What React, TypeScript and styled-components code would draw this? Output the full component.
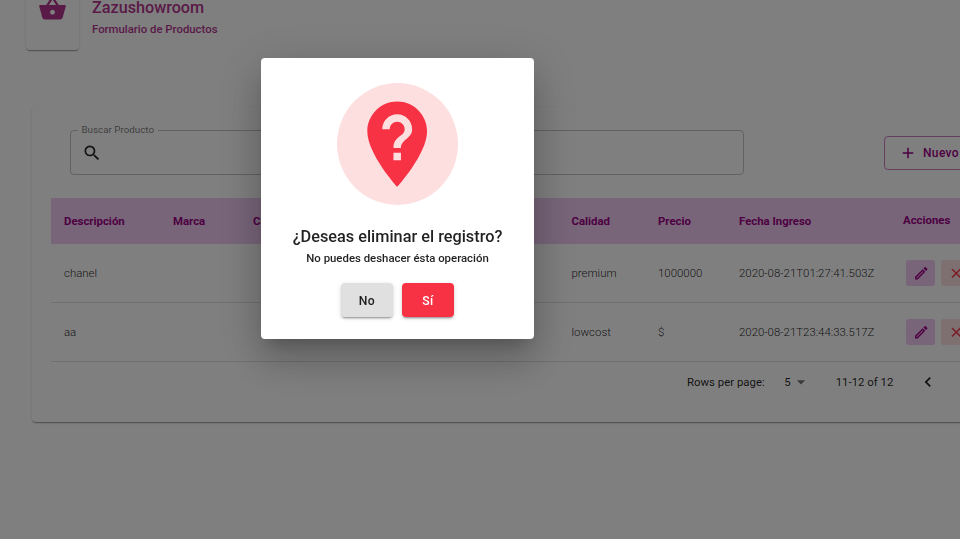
import React from "react";
import styled, { createGlobalStyle, css } from "styled-components";
import {
  MdAdd,
  MdArrowDropDown,
  MdChevronLeft,
  MdClose,
  MdNotListedLocation,
  MdOutlineEdit,
  MdSearch,
  MdShoppingBasket,
} from "react-icons/md";

const GlobalStyle = createGlobalStyle`
  *, *::before, *::after { box-sizing: border-box; }
  html, body { margin: 0; height: 100%; overflow: hidden; background: #fff; }
  body { font-family: Roboto, "Liberation Sans", sans-serif; color: rgba(0, 0, 0, 0.87); }
  button { font-family: inherit; }
`;

const paper = css`
  background: #fff;
  border-radius: 4px;
  box-shadow: 0 2px 1px -1px rgba(0, 0, 0, 0.2), 0 1px 1px 0 rgba(0, 0, 0, 0.14),
    0 1px 3px 0 rgba(0, 0, 0, 0.12);
`;

const Page = styled.div`
  height: 539px;
  overflow: hidden;
`;

const Header = styled.header`
  display: flex;
  height: 50px;
  padding-left: 26px;
  align-items: flex-end;
`;

const HeaderIcon = styled.div`
  ${paper}
  display: flex;
  flex: none;
  justify-content: center;
  align-items: flex-end;
  width: 53px;
  height: 54px;
  padding: 0 1px 27px 0;
  color: #b4358f;
  font-size: 29px;
`;

const HeaderText = styled.div`
  margin-left: 13px;
  height: 50px;
  color: #b4358f;
  white-space: nowrap;
`;

const Title = styled.h1`
  margin: 0;
  font-size: 16.2px;
  line-height: 15px;
  font-weight: 500;
`;

const Subtitle = styled.h2`
  margin: 5px 0 0;
  font-size: 11.37px;
  line-height: 18px;
  font-weight: 500;
`;

const Card = styled.main`
  ${paper}
  width: 996px;
  height: 315px;
  margin: 57px 0 0 32px;
  padding: 23px 19px 0;
`;

const Toolbar = styled.div`
  display: flex;
  align-items: flex-start;
  height: 68px;
  padding-left: 19px;
`;

const SearchField = styled.fieldset`
  width: 674px;
  height: 50px;
  min-width: 0;
  margin: -5px 140px 0 0;
  padding: 0 10px;
  border: 1px solid rgba(0, 0, 0, 0.23);
  border-radius: 4px;
  color: #222;
  font-size: 20px;
  line-height: 0;
`;

const SearchLabel = styled.legend`
  height: 10px;
  margin-left: -3.5px;
  padding: 0 4px;
  color: rgba(0, 0, 0, 0.54);
  font-size: 9.8px;
  line-height: 9px;
`;

const SearchIcon = styled(MdSearch)`
  margin: 8px 0 0 0.5px;
`;

const NewButton = styled.button`
  display: flex;
  align-items: center;
  width: 100px;
  height: 34px;
  margin-top: 6px;
  padding: 0 14px;
  border: 1px solid rgba(156, 0, 132, 0.5);
  border-radius: 4px;
  background: transparent;
  color: #9c0084;
  font-size: 12px;
  font-weight: 500;
  letter-spacing: 0.35px;
  svg { margin-right: 6px; font-size: 18px; }
`;

const columns = css`
  display: grid;
  grid-template-columns: 109px 80px 318.5px 86.5px 81px 164px 1fr;
  align-items: center;
  padding-left: 13px;
`;

const TableHead = styled.div`
  ${columns}
  height: 46px;
  background: #f0caf4;
  color: #9c0084;
  font-size: 11.4px;
  font-weight: 700;
`;

const ActionsHeading = styled.span`
  padding-bottom: 2px;
`;

const TableRow = styled.div`
  ${columns}
  height: 59px;
  border-bottom: 1px solid #e0e0e0;
  font-size: 11.43px;
  font-weight: 300;
`;

const Actions = styled.div`
  display: flex;
  gap: 6px;
  padding-left: 3px;
`;

const ActionButton = styled.button<{ $danger?: boolean }>`
  display: flex;
  align-items: center;
  justify-content: center;
  width: 29px;
  height: 26px;
  padding: 0 0 0 1px;
  border: 0;
  border-radius: 3px;
  background: ${(p) => (p.$danger ? "#fddfe0" : "#f0caf4")};
  color: ${(p) => (p.$danger ? "#f83245" : "#9c0084")};
  font-size: 16.5px;
`;

const Pagination = styled.div`
  display: flex;
  align-items: center;
  height: 40px;
  padding-left: 636px;
  font-size: 11.4px;
  white-space: nowrap;
`;

const PageSize = styled.div`
  display: flex;
  align-items: center;
  width: 51.5px;
  margin-left: 19.5px;
  svg { font-size: 20px; color: rgba(0, 0, 0, 0.54); }
`;

const PreviousIcon = styled(MdChevronLeft)`
  margin-left: 25px;
  font-size: 20px;
`;

const Backdrop = styled.div`
  position: fixed;
  inset: 0;
  background: rgba(0, 0, 0, 0.5);
`;

const Dialog = styled.div`
  position: absolute;
  left: 261px;
  top: 58px;
  display: flex;
  flex-direction: column;
  align-items: center;
  width: 273px;
  height: 281px;
  padding-top: 25px;
  border-radius: 4px;
  background: #fff;
  box-shadow: 0 11px 15px -7px rgba(0, 0, 0, 0.2), 0 24px 38px 3px rgba(0, 0, 0, 0.14),
    0 9px 46px 8px rgba(0, 0, 0, 0.12);
`;

const QuestionBadge = styled.div`
  display: flex;
  align-items: center;
  justify-content: center;
  width: 121px;
  height: 122px;
  padding-right: 1px;
  border-radius: 50%;
  background: #fddfe0;
  color: #f83245;
  font-size: 102.4px;
`;

const DialogTitle = styled.h2`
  margin: 20px 0 0;
  font-size: 16.3px;
  line-height: 24px;
  font-weight: 500;
`;

const DialogText = styled.p`
  margin: 0;
  font-size: 11.4px;
  line-height: 19px;
  font-weight: 500;
`;

const DialogActions = styled.div`
  display: flex;
  gap: 9px;
  margin-top: 15px;
`;

const DialogButton = styled.button<{ $confirm?: boolean }>`
  width: 52px;
  height: 34px;
  padding: 1px 0 0;
  border: 0;
  border-radius: 4px;
  background: ${(p) => (p.$confirm ? "#f83245" : "#e0e0e0")};
  color: ${(p) => (p.$confirm ? "#fff" : "rgba(0, 0, 0, 0.87)")};
  box-shadow: 0 3px 1px -2px rgba(0, 0, 0, 0.2), 0 2px 2px 0 rgba(0, 0, 0, 0.14),
    0 1px 5px 0 rgba(0, 0, 0, 0.12);
  font-size: 12.2px;
  font-weight: 500;
  letter-spacing: 0.35px;
`;

const products = [
  { name: "chanel", quality: "premium", price: "1000000", date: "2020-08-21T01:27:41.503Z" },
  { name: "aa", quality: "lowcost", price: "$", date: "2020-08-21T23:44:33.517Z" },
];

export default function App() {
  return (
    <>
      <GlobalStyle />
      <Page>
        <Header>
          <HeaderIcon><MdShoppingBasket /></HeaderIcon>
          <HeaderText>
            <Title>Zazushowroom</Title>
            <Subtitle>Formulario de Productos</Subtitle>
          </HeaderText>
        </Header>
        <Card>
          <Toolbar>
            <SearchField>
              <SearchLabel>Buscar Producto</SearchLabel>
              <SearchIcon />
            </SearchField>
            <NewButton><MdAdd />Nuevo</NewButton>
          </Toolbar>
          <TableHead>
            <span>Descripción</span>
            <span>Marca</span>
            <span>Categoría</span>
            <span>Calidad</span>
            <span>Precio</span>
            <span>Fecha Ingreso</span>
            <ActionsHeading>Acciones</ActionsHeading>
          </TableHead>
          {products.map((p) => (
            <TableRow key={p.name}>
              <span>{p.name}</span>
              <span />
              <span />
              <span>{p.quality}</span>
              <span>{p.price}</span>
              <span>{p.date}</span>
              <Actions>
                <ActionButton aria-label="Editar"><MdOutlineEdit /></ActionButton>
                <ActionButton $danger aria-label="Eliminar"><MdClose /></ActionButton>
              </Actions>
            </TableRow>
          ))}
          <Pagination>
            <span>Rows per page:</span>
            <PageSize>5<MdArrowDropDown /></PageSize>
            <span>11-12 of 12</span>
            <PreviousIcon />
          </Pagination>
        </Card>
      </Page>
      <Backdrop>
        <Dialog role="dialog">
          <QuestionBadge><MdNotListedLocation /></QuestionBadge>
          <DialogTitle>¿Deseas eliminar el registro?</DialogTitle>
          <DialogText>No puedes deshacer ésta operación</DialogText>
          <DialogActions>
            <DialogButton>No</DialogButton>
            <DialogButton $confirm>Sí</DialogButton>
          </DialogActions>
        </Dialog>
      </Backdrop>
    </>
  );
}
